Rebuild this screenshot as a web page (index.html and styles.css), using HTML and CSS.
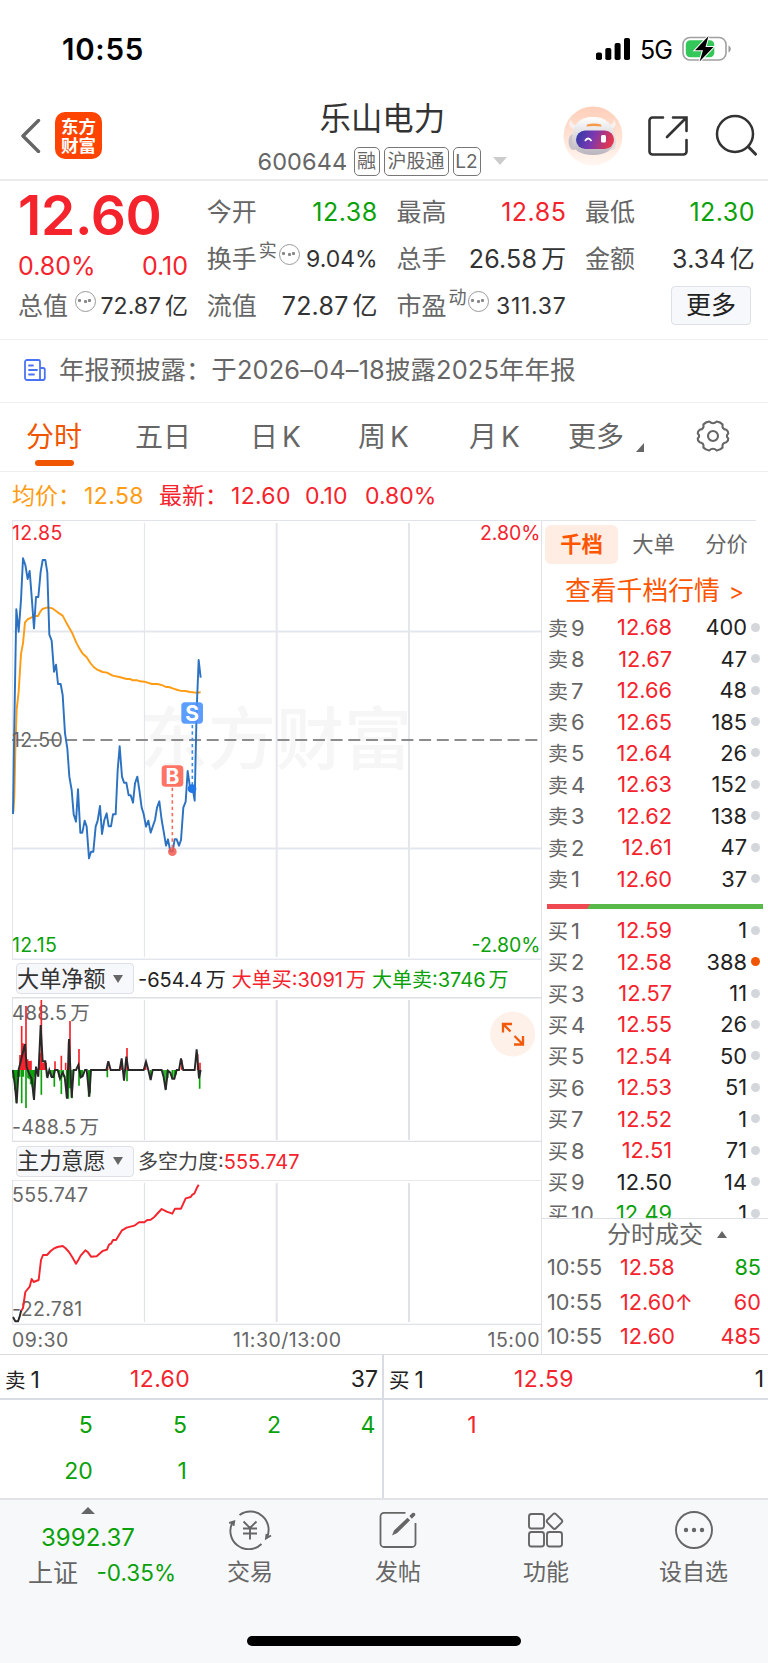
FILE: index.html
```html
<!DOCTYPE html>
<html lang="zh-CN">
<head>
<meta charset="utf-8">
<title>乐山电力 600644</title>
<link rel="stylesheet" href="styles.css">
</head>
<body>
<div class="screen">
  <div class="status">
    <span class="clock">10:55</span>
    <span class="status-right">
      <svg class="signal" viewBox="0 0 34 22"><rect x="0" y="14.500" width="6" height="7.500" rx="1.800"/><rect x="9.300" y="10" width="6" height="12" rx="1.800"/><rect x="18.600" y="5" width="6" height="17" rx="1.800"/><rect x="28" y="0" width="6" height="22" rx="1.800"/></svg>
      <span class="net">5G</span>
      <svg class="battery" viewBox="0 0 50 26"><rect x="1" y="1.500" width="43" height="22.500" rx="7" fill="none" stroke="#a0a0a0" stroke-width="1.600"/><path d="M46.500 9.500v7c3-1.500 3-5.500 0-7z" fill="#999"/><rect x="3.800" y="4.300" width="28.500" height="17" rx="4.500" fill="#34c759"/><path d="M26.500 0L13 14.200h8L17.600 25.500 31.500 11h-8z" fill="#000" stroke="#fff" stroke-width="2" paint-order="stroke"/></svg>
    </span>
  </div>

  <header class="header">
    <div class="head-left">
      <svg class="back" viewBox="0 0 20 34"><path d="M17.500 1.500L2 17l15.500 15.500" fill="none" stroke="#666" stroke-width="3.400" stroke-linecap="round" stroke-linejoin="round"/></svg>
      <div class="logo"><span>东方</span><span>财富</span></div>
    </div>
    <div class="head-mid">
      <div class="name">乐山电力</div>
      <div class="code"><span class="num">600644</span><span class="badge b1">融</span><span class="badge b2">沪股通</span><span class="badge b3">L2</span><i class="caret"></i></div>
    </div>
    <div class="head-right">
      <svg class="robot" viewBox="0 0 60 60">
        <defs>
          <linearGradient id="bg" x1="0" y1="0" x2="0" y2="1"><stop offset="0" stop-color="#ffceb8"/><stop offset="1" stop-color="#fff7f2"/></linearGradient>
          <linearGradient id="visor" x1="0" y1="0" x2="1" y2="0.200"><stop offset="0" stop-color="#2b3ca8"/><stop offset=".5" stop-color="#7a38b0"/><stop offset="1" stop-color="#e2354f"/></linearGradient>
          <linearGradient id="shell" x1="0" y1="0" x2="0" y2="1"><stop offset="0" stop-color="#fff"/><stop offset="1" stop-color="#b9b4bd"/></linearGradient>
        </defs>
        <circle cx="30" cy="30" r="29.500" fill="url(#bg)"/>
        <path d="M10 23c-5-3-4-7-2-9 1 4 4 6 9 6zM49 23c5-3 4-7 2-9-1 4-4 6-9 6z" fill="#f6f1f0"/>
        <ellipse cx="10.500" cy="36" rx="5" ry="8" fill="#c9c3c9"/><ellipse cx="49" cy="36" rx="4" ry="8" fill="#e3dde0"/>
        <path d="M9 33c0-15 8-22 21-22s21 7 21 22c0 11-8 16-21 16S9 44 9 33z" fill="url(#shell)"/>
        <rect x="13" y="24.500" width="38" height="18.500" rx="9.250" fill="url(#visor)"/>
        <path d="M24 18.500q7-2 14 0l.5 2q-8-1-15 0z" fill="#f59a4b"/>
        <path d="M22 35q3-5 6.500 0" fill="none" stroke="#fff" stroke-width="1.800"/><rect x="38" y="29" width="5" height="7.500" rx="1.500" fill="#fff"/>
      </svg>
      <svg class="share" viewBox="0 0 42 42"><path d="M16 2.500H5.500a3 3 0 0 0-3 3v31a3 3 0 0 0 3 3h31a3 3 0 0 0 3-3V25M26 2.500h13.500V16M39 3L20 22" fill="none" stroke="#333" stroke-width="2.600" stroke-linecap="round"/></svg>
      <svg class="search" viewBox="0 0 42 42"><circle cx="20" cy="20" r="18" fill="none" stroke="#333" stroke-width="2.500"/><path d="M33 32.500l8.500 8.500" stroke="#333" stroke-width="3"/></svg>
    </div>
  </header>

  <section class="quote">
    <div class="q-main">
      <div class="price red">12.60</div>
      <div class="q-row chg red"><span>0.80%</span><span>0.10</span></div>
      <div class="q-row"><span class="lbl">总值</span><i class="info tv"></i><span class="val sm">72.87<em>亿</em></span></div>
    </div>
    <div class="q-col">
      <div class="q-row"><span class="lbl">今开</span><span class="val green">12.38</span></div>
      <div class="q-row"><span class="lbl">换手</span><span class="sup">实</span><i class="info"></i><span class="val sm">9.04%</span></div>
      <div class="q-row"><span class="lbl">流值</span><span class="val">72.87<em>亿</em></span></div>
    </div>
    <div class="q-col">
      <div class="q-row"><span class="lbl">最高</span><span class="val red">12.85</span></div>
      <div class="q-row"><span class="lbl">总手</span><span class="val">26.58<em>万</em></span></div>
      <div class="q-row"><span class="lbl">市盈</span><span class="sup">动</span><i class="info"></i><span class="val sm wide">311.37</span></div>
    </div>
    <div class="q-col">
      <div class="q-row"><span class="lbl">最低</span><span class="val green">12.30</span></div>
      <div class="q-row"><span class="lbl">金额</span><span class="val">3.34<em>亿</em></span></div>
      <div class="q-row"><span class="more">更多</span></div>
    </div>
  </section>

  <section class="notice">
    <svg viewBox="0 0 22 22"><path d="M3 1h11.500a1.500 1.500 0 0 1 1.500 1.500V21H3a2 2 0 0 1-2-2V3a2 2 0 0 1 2-2zM16 9h3a1.800 1.800 0 0 1 1.800 1.800V19a2 2 0 0 1-2 2H16M5 6.500h4M5 11h8M5 15.500h5" fill="none" stroke="#4a73f3" stroke-width="1.800" stroke-linecap="round"/></svg>
    <span>年报预披露：</span><span class="n2">于2026–04–18披露2025年年报</span>
  </section>

  <nav class="tabs">
    <span class="tab on t1">分时</span><span class="tab t2">五日</span><span class="tab t3">日<b>K</b></span><span class="tab t4">周<b>K</b></span><span class="tab t5">月<b>K</b></span><span class="tab t6">更多</span>
    <i class="corner"></i>
    <svg class="gear" viewBox="-17 -17 34 34"><path d="M-3.800-14.500Q0-11 3.800-14.500Q7.500-14 9.600-11.500Q8.600-7 13.400-6.200Q15.600-4.500 15.300-2.500Q12.400 0 15.300 2.500Q15.600 4.500 13.400 6.200Q8.600 7 9.600 11.500Q7.500 14 3.800 14.500Q0 11-3.800 14.500Q-7.500 14-9.600 11.500Q-8.600 7-13.400 6.200Q-15.600 4.500-15.300 2.500Q-12.400 0-15.300-2.500Q-15.600-4.500-13.400-6.200Q-8.600-7-9.600-11.500Q-7.500-14-3.800-14.500Z" fill="none" stroke="#666" stroke-width="2.100" stroke-linejoin="round"/><circle r="5" fill="none" stroke="#666" stroke-width="2.100"/></svg>
  </nav>

  <div class="legend"><span class="avg l1">均价：</span><span class="avg l2">12.58</span><span class="red l3">最新：</span><span class="red l4">12.60</span><span class="red l5">0.10</span><span class="red l6">0.80%</span></div>

  <main class="board">
    <div class="charts">
      <svg class="c1" viewBox="12 520 530 440">
        <text x="140" y="764" class="wm">东方财富</text>
        <g stroke="#e3e7ed" fill="none"><path d="M12.500 520v439.500" stroke-width="1.200"/><path d="M12 959.300h530" stroke-width="1.400"/><path d="M144.500 523v434" stroke-width="1.200"/><path d="M276.700 523v434M409 523v434M12 631.500h529M12 848.500h529" stroke-width="2"/></g>
        <path d="M12 740h529" stroke="#8c8c8c" stroke-width="2" stroke-dasharray="12 5.700" fill="none"/>
        <g transform="translate(0 510) scale(.33333)" fill="none" stroke-width="5.800" stroke-linejoin="round">
          <path stroke="#ff9c14" d="M40 905L43 860 46 720 50 598 56 545 63 432 69 400 75 337 83 328 95 322 101 318H114L121 305 127 297 143 292 157 295 173 307 188 317 200 340 217 370 230 400 238 415 247 430 260 442 271 459 281 471 290 478 308 486 321 488 338 497 358 501 380 507 390 507 399 511 412 511 420 514 433 515 456 522 473 522 488 526 498 531 507 531 520 536 533 540 541 542 556 543 570 546 587 548 602 547"/>
          <path stroke="#2d72c0" d="M39 912L43 640 49 298 56 365 63 270 69 145 76 165 83 207 89 183 95 260 102 355 108 261H115L122 185 128 150H136L142 188 148 374 155 392 162 485 168 464 174 522H182L188 555 195 670 202 715 208 800 215 840 221 913 228 935 234 838 241 968H247L254 932 260 950 267 1045 273 1025H280L287 950 293 932 300 888 306 972 313 930 320 910 326 949H333L339 913H347L353 780 359 709 366 800 372 818H379L386 856H392L399 878 405 820 412 800 418 840 425 893 431 912 438 950 445 932 452 968 465 930 471 893 478 874 485 930 492 970 498 1007 504 988 511 1024H518L524 988H530L537 1007 543 990 550 893 557 875 563 783 570 832 578 835 584 872 590 600 596 450 602 503"/>
          <path d="M517 833v185" stroke="#ff6b5b" stroke-dasharray="10 9" stroke-width="4.800"/><path d="M577 645v185" stroke="#3c8cf5" stroke-dasharray="10 9" stroke-width="4.800"/>
          <circle cx="517" cy="1025" r="13" fill="#f25b50" fill-opacity=".85"/><circle cx="576" cy="836" r="13" fill="#2176e8"/>
          <rect x="485" y="766" width="65" height="64" rx="11" fill="#ff7465"/><rect x="544" y="577" width="65" height="64" rx="11" fill="#4a93ff" fill-opacity=".9"/>
        </g>
        <text x="172.500" y="783.500" class="mark">B</text><text x="192.200" y="720.500" class="mark">S</text>
        <text x="12" y="540" class="ax" fill="#f5232c">12.85</text><text x="540.500" y="540" class="ax end" fill="#f5232c">2.80%</text>
        <text x="12" y="746.500" class="ax" fill="#666">12.50</text>
        <text x="12" y="952" class="ax" fill="#0aa10a">12.15</text><text x="540.500" y="952" class="ax end" fill="#0aa10a">-2.80%</text>
      </svg>
      <div class="ind"><span class="dd">大单净额<i></i></span><span class="ind-txt d1"><span class="dark">-654.4<em>万</em></span><span class="red">大单买:3091<em>万</em></span><span class="green">大单卖:3746<em>万</em></span></span></div>
      <svg class="c2" viewBox="12 997 530 145">
        <g stroke="#dfe3e9" fill="none"><path d="M12 997.700h530M12 1141.500h530" stroke="#dcdfe4" stroke-width="1.600"/><path d="M12.500 997v145M144.500 1000v140" stroke-width="1.200"/><path d="M276.700 1000v140M409 1000v140" stroke-width="2"/></g>
        <text x="12" y="1019.500" class="ax" fill="#666">488.5<tspan dx="3">万</tspan></text><text x="12" y="1134" class="ax" fill="#666">-488.5<tspan dx="3">万</tspan></text>
        <g transform="translate(0 950) scale(.33333)" fill="none" stroke-width="5">
          <path stroke="#f5232c" d="M60 360v-45M65 360V228M69 360v-80M73 360v-70M78 360V168M83 360v-32M88 360v-27M93 360v-28M119 360v-50M124 360V150M129 360v-22M134 360v-24M138 360v-22M165 360v-26M184 360v-43M197 360v-22M206 360v-85M210 360V213M237 360v-63M323 360v-22M365 360v-25M381 360v-66M437 360v-24M545 360v-30M593 360v-48M600 360v-22"/>
          <path stroke="#0aa10a" d="M40 360v25M45 360v60M49 360v98M54 360v22M59 360v20M65 360v100M70 360v20M78 360v114M84 360v25M88 360v28M92 360v43M97 360v50M101 360v80M106 360v20M112 360v12M124 360v74M140 360v20M153 360v20M159 360v24M163 360v50M178 360v22M184 360v72M190 360v22M200 360v84M205 360v86M210 360v55M216 360v85M237 360v47M242 360v22M247 360v22M266 360v80M270 360v70M322 360v22M373 360v25M381 360v34M452 360v26M492 360v30M498 360v58M503 360v24M517 360v25M523 360v25M528 360v14M599 360v56"/>
          <path stroke="#282828" stroke-width="5.800" d="M38 360L44 400 50 460 56 358 62 335 68 310 75 282 80 352 88 372 95 386 102 450 108 350 115 380 122 225 128 334H136L142 384 148 360 155 381H160L165 360H173L180 386 188 368 194 380 201 446 207 267 215 443 221 360H228L235 345 242 382 248 378 255 360H260L268 440 273 360H319L325 334 332 360H359L365 325 372 392 379 320 385 360H431L438 335 445 360 452 390 458 360H485L491 382 497 420 504 362 511 368 517 386H523L530 360H537L543 325 550 360H584L590 298 597 385 602 360"/>
        </g>
        <circle cx="512.700" cy="1034" r="22.500" fill="#fdf1ea"/><path d="M503 1032.500v-8.500h9M503.500 1024.500l7 7M514 1044.500h9v-8.500M522.500 1044l-8-8" fill="none" stroke="#f05a0a" stroke-width="2.300"/>
      </svg>
      <div class="ind i2"><span class="dd">主力意愿<i></i></span><span class="ind-txt"><span class="mid">多空力度:<span class="red">555.747</span></span></span></div>
      <svg class="c3" viewBox="12 1180 530 145">
        <g stroke="#dfe3e9" fill="none"><path d="M12 1180.300h530" stroke="#e6e9ee" stroke-width="1.200"/><path d="M12 1324.500h530" stroke-width="1.600"/><path d="M12.500 1180v145M144.500 1183v139" stroke-width="1.200"/><path d="M276.700 1183v139M409 1183v139" stroke-width="2"/></g>
        <text x="12" y="1202" class="ax" fill="#666">555.747</text><text x="12" y="1316" class="ax" fill="#666">-22.781</text>
        <g transform="translate(0 950) scale(.33333)" fill="none" stroke-width="5.800" stroke-linejoin="round">
          <path stroke="#282828" d="M39 1101L46 1114H54L58 1103 64 1080"/>
          <path stroke="#f5232c" d="M64 1082L69 1074 76 1026 89 1010 95 987 101 996 116 990 123 930 129 915H141L152 903 161 896 172 891 188 888 196 894 207 906 217 922 228 941 235 930 242 917 256 901 264 907 273 920 290 919 308 903 321 899 327 884 333 881 339 870H348L366 841 380 833 403 827 417 817H433L442 810 452 809 464 800 471 792 485 777 500 785 517 791 525 776H543L557 745 572 741 577 734 583 731 590 715 596 704"/>
        </g>
      </svg>
      <div class="times"><span>09:30</span><span>11:30/13:00</span><span>15:00</span></div>
    </div>

    <aside class="book">
      <div class="btabs"><span class="on">千档</span><span>大单</span><span>分价</span></div>
      <div class="see">查看千档行情<span>&gt;</span></div>
      <div class="levels">
        <div class="lv"><span class="k">卖<em>9</em></span><span class="p red">12.68</span><span class="v">400</span><i></i></div>
        <div class="lv"><span class="k">卖<em>8</em></span><span class="p red">12.67</span><span class="v">47</span><i></i></div>
        <div class="lv"><span class="k">卖<em>7</em></span><span class="p red">12.66</span><span class="v">48</span><i></i></div>
        <div class="lv"><span class="k">卖<em>6</em></span><span class="p red">12.65</span><span class="v">185</span><i></i></div>
        <div class="lv"><span class="k">卖<em>5</em></span><span class="p red">12.64</span><span class="v">26</span><i></i></div>
        <div class="lv"><span class="k">卖<em>4</em></span><span class="p red">12.63</span><span class="v">152</span><i></i></div>
        <div class="lv"><span class="k">卖<em>3</em></span><span class="p red">12.62</span><span class="v">138</span><i></i></div>
        <div class="lv"><span class="k">卖<em>2</em></span><span class="p red">12.61</span><span class="v">47</span><i></i></div>
        <div class="lv"><span class="k">卖<em>1</em></span><span class="p red">12.60</span><span class="v">37</span><i></i></div>
      </div>
      <div class="ratio"></div>
      <div class="levels buy">
        <div class="lv"><span class="k">买<em>1</em></span><span class="p red">12.59</span><span class="v">1</span><i></i></div>
        <div class="lv"><span class="k">买<em>2</em></span><span class="p red">12.58</span><span class="v">388</span><i class="hot"></i></div>
        <div class="lv"><span class="k">买<em>3</em></span><span class="p red">12.57</span><span class="v">11</span><i></i></div>
        <div class="lv"><span class="k">买<em>4</em></span><span class="p red">12.55</span><span class="v">26</span><i></i></div>
        <div class="lv"><span class="k">买<em>5</em></span><span class="p red">12.54</span><span class="v">50</span><i></i></div>
        <div class="lv"><span class="k">买<em>6</em></span><span class="p red">12.53</span><span class="v">51</span><i></i></div>
        <div class="lv"><span class="k">买<em>7</em></span><span class="p red">12.52</span><span class="v">1</span><i></i></div>
        <div class="lv"><span class="k">买<em>8</em></span><span class="p red">12.51</span><span class="v">71</span><i></i></div>
        <div class="lv"><span class="k">买<em>9</em></span><span class="p dark">12.50</span><span class="v">14</span><i></i></div>
        <div class="lv"><span class="k">买<em>10</em></span><span class="p green">12.49</span><span class="v">1</span><i></i></div>
      </div>
      <div class="deal-head">分时成交<i></i></div>
      <div class="deal"><span class="t">10:55</span><span class="red">12.58</span><span class="v green">85</span></div>
      <div class="deal"><span class="t">10:55</span><span class="red">12.60↑</span><span class="v red">60</span></div>
      <div class="deal"><span class="t">10:55</span><span class="red">12.60</span><span class="v red">485</span></div>
    </aside>
  </main>

  <section class="queue">
    <div class="side sell">
      <div class="q-head"><span class="k">卖<em>1</em></span><span class="p red">12.60</span><span class="v">37</span></div>
      <div class="orders green"><span>5</span><span>5</span><span>2</span><span>4</span><span>20</span><span>1</span></div>
    </div>
    <div class="side">
      <div class="q-head"><span class="k">买<em>1</em></span><span class="p red">12.59</span><span class="v">1</span></div>
      <div class="orders red"><span>1</span></div>
    </div>
  </section>

  <footer class="footer">
    <div class="bar">
      <div class="index"><i class="up"></i><div class="ix green">3992.37</div><div class="iy"><span>上证</span><span class="green">-0.35%</span></div></div>
      <div class="act"><svg viewBox="-22 -20 44 40"><path d="M-10.500-15A18.300 18.300 0 0 1 16.500 8.300M11.500 14A18.300 18.300 0 0 1-17-8.500M-20.800-7l5-1.700-.7 4.500M21 5.500l-5 3 .6-4.500M-6.500-8.500L0-2l6.500-6.500M-7-1.500H7M-7 3.500H7M0-2V9.500" fill="none" stroke="#666" stroke-width="1.900"/></svg><span>交易</span></div>
      <div class="act"><svg viewBox="-22 -20 44 40"><path d="M7.500-17.200H-14a3.500 3.500 0 0 0-3.500 3.500V13.500a3.500 3.500 0 0 0 3.500 3.500H14a3.500 3.500 0 0 0 3.500-3.500V-7" fill="none" stroke="#666" stroke-width="1.800"/><path d="M-6 5.500l2-5L9.500-12.300l2.600 2.600L-.8 3zM11.300-14l3-3q1.800-.8 2.900.8.400 1.200-.4 2l-3 3z" fill="#666"/></svg><span>发帖</span></div>
      <div class="act"><svg viewBox="-22 -20 44 40"><g fill="none" stroke="#666" stroke-width="1.900"><rect x="-17" y="-16" width="15" height="14.500" rx="2.500"/><rect x="-17" y="2" width="15" height="14.500" rx="2.500"/><rect x="1" y="2" width="15" height="14.500" rx="2.500"/><rect x="-6" y="-6" width="12" height="12" rx="2" transform="translate(8.500 -8.800) rotate(45)"/></g></svg><span>功能</span></div>
      <div class="act"><svg viewBox="-22 -20 44 40"><circle r="18" fill="none" stroke="#666" stroke-width="1.900"/><g fill="#666"><circle cx="-8" r="2.200"/><circle r="2.200"/><circle cx="8" r="2.200"/></g></svg><span>设自选</span></div>
    </div>
    <div class="home"></div>
  </footer>
</div>
</body>
</html>
```
FILE: styles.css
```css
* { box-sizing: border-box; }
body { margin: 0; background: #fff; }
em, i, b { font-style: normal; font-weight: inherit; }
svg { display: block; flex: none; }
.screen { width: 768px; height: 1663px; overflow: hidden; font-family: Inter, "Noto Sans CJK SC", sans-serif; color: #666; font-size: 23px; white-space: nowrap; }
.red { color: #f5232c; }
.green { color: #0aa10a; }
.dark { color: #222; }

.status { height: 98px; display: flex; justify-content: space-between; padding: 0 36px 0 62px; color: #000; }
.clock { font-size: 29.5px; font-weight: 600; line-height: 99px; letter-spacing: .7px; }
.status-right { display: flex; align-items: center; }
.signal { width: 34px; height: 22px; }
.net { font-size: 25px; width: 32px; margin: 2px 10px 0 10px; letter-spacing: -1px; }
.battery { width: 50px; height: 26px; }

.header { height: 83px; display: flex; justify-content: space-between; border-bottom: 2px solid #ebebeb; }
.head-left { width: 200px; display: flex; padding: 14px 0 0 20px; gap: 15px; }
.back { width: 20px; height: 34px; margin-top: 7px; margin-left: 1px; margin-right: -1px; }
.logo { width: 47px; height: 47px; border-radius: 10px; background: #ff4400; color: #fff; display: flex; flex-direction: column; align-items: center; justify-content: center; font-size: 17.5px; font-weight: 700; line-height: 19px; }
.head-mid { width: 280px; padding-left: 13px; }
.name { font-size: 31.4px; line-height: 42px; padding-left: 65px; color: #333; }
.code { display: flex; align-items: center; margin-top: 6px; height: 30px; margin-left: 3px; }
.num { font-size: 23.5px; letter-spacing: .1px; width: 96px; }
.badge { height: 29px; line-height: 27px; border: 1.5px solid #777; border-radius: 5px; font-size: 19px; text-align: center; margin-right: 4px; }
.b1 { width: 26px; } .b2 { width: 65px; } .b3 { width: 28px; }
.caret { border: 7px solid transparent; border-top: 8px solid #ccc; border-bottom: 0; margin-left: 8px; }
.head-right { width: 205px; display: flex; }
.robot { width: 60px; height: 60px; margin-top: 8px; }
.share { width: 42px; height: 42px; margin: 17px 0 0 24px; }
.search { width: 42px; height: 42px; margin: 16px 0 0 26px; }

.quote { height: 159px; display: grid; grid-template-columns: 169px 170px 169px 169px; gap: 19.7px; padding-left: 19px; border-bottom: 1px solid #eee; font-size: 25px; }
.price { font-size: 55px; font-weight: 600; line-height: 68px; height: 66px; letter-spacing: -.3px; margin-left: -1px; }
.q-row { height: 47px; display: flex; align-items: center; line-height: 30px; }
.q-main .q-row { height: 42px; }
.q-main .chg { height: 38px; justify-content: space-between; margin-left: -1px; }
.lbl { margin-left: -1px; }
.q-col { padding-top: 7px; }
.val { margin-left: auto; color: #333; letter-spacing: .2px; }
.val em { margin-left: 4px; }
.val.sm { font-size: 23px; letter-spacing: 0; }
.val.wide { letter-spacing: .7px; }
.val.red { color: #f5232c; letter-spacing: .5px; } .val.green { color: #0aa10a; letter-spacing: .5px; }
.sup { font-size: 18px; margin: -16px 2px 0 2px; }
.info { width: 21px; height: 21px; border: 1.8px solid #999; border-radius: 50%; margin-top: -9px; background: radial-gradient(circle, #888 1.3px, transparent 1.8px) center / 5px 5px no-repeat, radial-gradient(circle, #888 1.3px, transparent 1.8px) 1px 6px / 5px 5px no-repeat, radial-gradient(circle, #888 1.3px, transparent 1.8px) 11px 6px / 5px 5px no-repeat; }
.info.tv { margin-left: 7px; }
.more { margin: 0 4px 0 auto; width: 80px; height: 39px; line-height: 36px; border: 1.5px solid #dde0e6; border-radius: 4px; background: #f7f8fb; color: #222; text-align: center; }

.notice { height: 63px; display: flex; align-items: center; padding-left: 24px; font-size: 25.4px; border-bottom: 1px solid #eee; line-height: 30px; padding-bottom: 3px; }
.notice svg { width: 22px; height: 22px; margin-right: 13px; }
.n2 { letter-spacing: .15px; }

.tabs { height: 69px; border-bottom: 1px solid #eee; display: flex; align-items: center; font-size: 28px; padding-left: 26px; }
.tab { height: 66px; line-height: 66px; flex: none; }
.tab b { margin-left: 4px; }
.t1 { width: 109px; } .t2 { width: 115px; } .t3 { width: 108px; } .t4 { width: 111px; } .t5 { width: 99px; } .t6 { width: 57px; }
.tab.on { color: #f05500; }
.tab.on::after { content: ""; display: block; width: 39px; height: 6px; border-radius: 3px; background: #f05500; margin: -10px 0 0 9px; }
.corner { border-left: 8px solid transparent; border-bottom: 9px solid #666; margin: 20px 0 0 11px; }
.gear { width: 34px; height: 34px; margin: -2px 0 0 52px; }

.legend { height: 48px; display: flex; align-items: center; padding-left: 12px; font-size: 23px; line-height: 48px; }
.avg { color: #ff9c14; }
.l1 { width: 72px; } .l2 { width: 75px; letter-spacing: .4px; } .l3 { width: 72px; } .l4 { width: 74px; letter-spacing: .3px; } .l5 { width: 60px; }

.board { height: 834px; display: flex; position: relative; }
.board::before { content: ""; position: absolute; left: 12px; top: 0; width: 744px; height: 1px; background: #e0e4ea; }
.charts { width: 542px; padding-left: 12px; border-right: 1.5px solid #dfe3e9; flex: none; }
.charts svg { width: 530px; }
.c1 { height: 440px; } .c2, .c3 { height: 145px; }
.wm { font-size: 68px; font-weight: 500; fill: #f6f6f6; }
.ax { font-size: 19.5px; letter-spacing: .35px; }
.end { text-anchor: end; letter-spacing: 0; }
.mark { font-size: 21px; font-weight: 700; fill: #fff; text-anchor: middle; }
.ind { height: 37px; display: flex; align-items: center; }
.ind.i2 { height: 38px; }
.dd { width: 118px; height: 31px; margin-left: 4px; border: 1.5px solid #dde0e6; border-radius: 4px; background: #f7f8fb; color: #333; font-size: 22.2px; line-height: 28px; display: flex; align-items: center; }
.dd i { border: 5px solid transparent; border-top: 8px solid #666; border-bottom: 0; margin-left: 7px; }
.ind-txt { display: flex; gap: 6px; margin: -1px 0 0 4px; font-size: 20px; }
.ind-txt em { margin-left: 3px; }
.mid { color: #444; }
.times { display: grid; grid-template-columns: 221px 1fr auto; height: 29px; line-height: 31px; font-size: 19.5px; letter-spacing: .5px; padding-right: 1px; }

.book { flex: 1; overflow: hidden; }
.btabs { height: 50px; display: flex; padding: 5px 0 0 3px; font-size: 21.3px; line-height: 38px; }
.btabs span { width: 73px; text-align: center; }
.btabs .on { height: 39px; border-radius: 6px; background: #ffece3; color: #ff5500; font-weight: 700; margin-right: -1px; }
.see { height: 41px; line-height: 41px; padding-left: 23px; font-size: 25.8px; color: #ff5500; }
.see span { margin-left: 9px; font-size: 23px; }
.levels { font-size: 21.8px; }
.lv { height: 31.44px; display: flex; align-items: center; padding: 1px 8px 0 6px; }
.lv .k { width: 60px; font-size: 20px; }
.lv em { font-size: 22px; margin-left: 3px; }
.lv .p { width: 64px; text-align: right; }
.lv .v { flex: 1; text-align: right; color: #222; margin-right: 4px; }
.lv i { width: 9px; height: 9px; border-radius: 50%; background: #d3d6db; }
.lv .hot { background: #f05500; }
.ratio { height: 5px; margin: 10px 5px 5px; background: linear-gradient(125deg, #ee4950 35px, #58b84a 36px); }
.buy { height: 305px; overflow: hidden; border-bottom: 1.5px solid #dcdfe5; }
.deal-head { height: 31px; line-height: 31px; font-size: 24px; padding-left: 65px; display: flex; align-items: center; }
.deal-head i { border: 5px solid transparent; border-bottom: 7px solid #666; border-top: 0; margin-left: 14px; }
.deal { height: 34.6px; display: flex; align-items: center; padding: 0 7px 0 5px; font-size: 21.7px; }
.deal .t { width: 73px; }
.deal .v { margin-left: auto; }

.queue { height: 144px; display: flex; border-top: 1.5px solid #d9dce2; }
.side { width: 384px; }
.sell { border-right: 2px solid #d9dce2; }
.q-head { height: 45px; display: flex; align-items: center; padding: 5px 4px 0 5px; border-bottom: 2px solid #d9dce2; color: #222; }
.q-head .k { width: 125px; font-size: 20.5px; }
.q-head em { font-size: 23px; margin-left: 5px; }
.q-head .p { letter-spacing: .4px; }
.q-head .v { margin-left: auto; }
.orders { display: grid; grid-template-columns: repeat(4, 94.2px); grid-auto-rows: 45.6px; padding-top: 1px; line-height: 48px; text-align: right; }
.orders span { padding-right: 1.5px; }

.footer { height: 165px; background: #f7f8fa; border-top: 2px solid #e2e3e6; }
.bar { display: grid; grid-template-columns: 176px 148px 148px 148px 147px; height: 137px; }
.index { display: flex; flex-direction: column; align-items: center; font-size: 24px; }
.up { border: 7px solid transparent; border-bottom: 7px solid #666; border-top: 0; margin-top: 7px; }
.ix { line-height: 34px; margin-top: 7px; }
.iy { display: flex; justify-content: space-between; width: 148px; line-height: 34px; font-size: 25px; margin: 1px 0 0 28px; }
.iy .green { font-size: 22.5px; }
.act { display: flex; flex-direction: column; align-items: center; font-size: 23px; line-height: 34px; padding-top: 10px; }
.act svg { width: 44px; height: 40px; margin-bottom: 5px; }
.home { width: 274px; height: 10px; border-radius: 5px; background: #000; margin: -1px auto 0; }
```
